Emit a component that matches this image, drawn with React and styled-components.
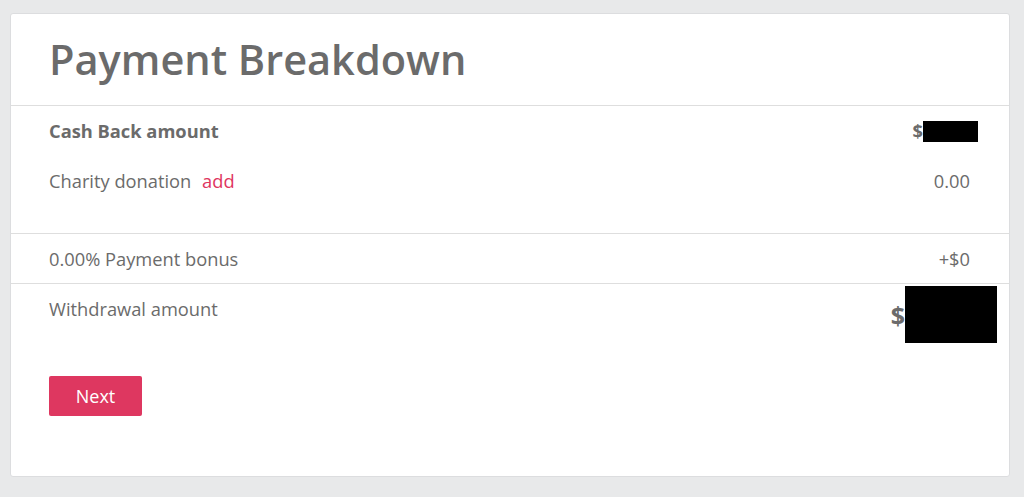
import styled, { createGlobalStyle } from "styled-components";

const GlobalStyle = createGlobalStyle`
	html, body {
		margin: 0;
		padding: 0;
		background: #e8e9ea;
		font-family: "Open Sans", "Liberation Sans", sans-serif;
		color: #6b6b6b;
	}
`;

const Page = styled.div`
	height: 497px;
	padding: 13px 14px 0 10px;
	box-sizing: border-box;
`;

const Card = styled.div`
	width: 1000px;
	height: 464px;
	box-sizing: border-box;
	background: #fff;
	border: 1px solid #dcdddf;
	border-radius: 3px;
	display: flex;
	flex-direction: column;
`;

const Header = styled.div`
	height: 91px;
	display: flex;
	align-items: center;
	padding: 0 38px;
	border-bottom: 1px solid #dedede;
`;

const Title = styled.h1`
	margin: 0;
	margin-top: -2px;
	font-size: 41.5px;
	font-weight: 600;
	color: #6b6b6b;
`;

const Section = styled.div`
	display: flex;
	flex-direction: column;
	gap: ${(p) => p.$gap || 0}px;
	padding: ${(p) => p.$pad};
	border-bottom: ${(p) => (p.$divider ? "1px solid #dedede" : "none")};
`;

const Row = styled.div`
	display: flex;
	justify-content: space-between;
	align-items: ${(p) => (p.$top ? "flex-start" : "center")};
	font-size: 18.3px;
	line-height: 24px;
	font-weight: ${(p) => (p.$bold ? 700 : 400)};
`;

const Label = styled.span`
	margin-top: ${(p) => p.$offset || 0}px;
`;

const Link = styled.a`
	color: #e0355f;
	margin-left: 6px;
	text-decoration: none;
`;

const Value = styled.span`
	display: flex;
	align-items: center;
	font-weight: ${(p) => (p.$bold ? 700 : 400)};
	font-size: ${(p) => p.$size || 18.3}px;
	margin-right: ${(p) => p.$overhang || 0}px;
`;

const Redacted = styled.span`
	display: inline-block;
	background: #000;
	width: ${(p) => p.$w}px;
	height: ${(p) => p.$h}px;
`;

const NextButton = styled.button`
	align-self: flex-start;
	width: 93px;
	height: 40px;
	margin-top: 33px;
	border: none;
	border-radius: 2px;
	background: #de3760;
	color: #fff;
	font-family: "Open Sans", "Liberation Sans", sans-serif;
	font-size: 18px;
	cursor: pointer;
`;

const App = () => {
	return (
		<Page>
			<GlobalStyle />
			<Card>
				<Header>
					<Title>Payment Breakdown</Title>
				</Header>
				<Section $pad="13px 39px 40px 38px" $gap={26} $divider>
					<Row $bold>
						<span>Cash Back amount</span>
						<Value $bold $overhang={-8}>
							$<Redacted $w={55} $h={21} />
						</Value>
					</Row>
					<Row>
						<span>
							Charity donation <Link href="#">add</Link>
						</span>
						<Value>0.00</Value>
					</Row>
				</Section>
				<Section $pad="13px 39px 12px 38px" $divider>
					<Row>
						<span>0.00% Payment bonus</span>
						<Value>+$0</Value>
					</Row>
				</Section>
				<Section $pad="2px 39px 0 38px">
					<Row $top>
						<Label $offset={11}>Withdrawal amount</Label>
						<Value $bold $size={25} $overhang={-27}>
							$<Redacted $w={92} $h={57} />
						</Value>
					</Row>
					<NextButton>Next</NextButton>
				</Section>
			</Card>
		</Page>
	);
};

export default App;
